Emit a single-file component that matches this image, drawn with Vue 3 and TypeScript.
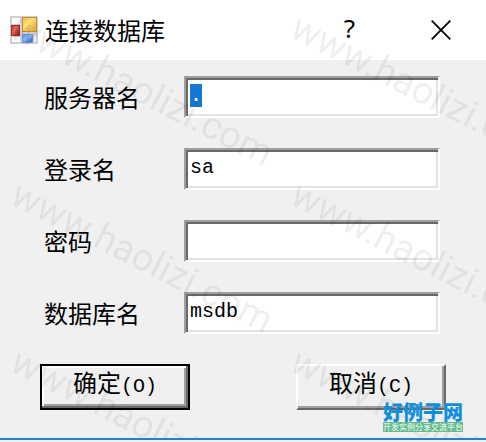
<script setup lang="ts">
import { onMounted, ref } from 'vue'

interface Field {
  id: string
  label: string
  value: string
  type: string
}

const fields = ref<Field[]>([
  { id: 'server', label: '服务器名', value: '.', type: 'text' },
  { id: 'login', label: '登录名', value: 'sa', type: 'text' },
  { id: 'password', label: '密码', value: '', type: 'password' },
  { id: 'database', label: '数据库名', value: 'msdb', type: 'text' },
])

const form = ref<HTMLFormElement | null>(null)

onMounted(() => {
  const first = form.value?.querySelector('input')
  first?.focus()
  first?.select()
})

const marks = [
  { x: 8, y: 36 },
  { x: 288, y: 36 },
  { x: 8, y: 203 },
  { x: 288, y: 203 },
  { x: 8, y: 370 },
  { x: 288, y: 370 },
]
</script>

<template>
  <main class="dialog">
    <header class="titlebar">
      <svg class="app-icon" viewBox="0 0 28 28" aria-hidden="true">
        <defs>
          <linearGradient id="gold" x1="0" y1="0" x2="1" y2="1">
            <stop offset="0" stop-color="#f0b93c" />
            <stop offset=".4" stop-color="#ffe07a" />
            <stop offset="1" stop-color="#dc9c24" />
          </linearGradient>
          <linearGradient id="red" x1="0" y1="0" x2="1" y2="1">
            <stop offset="0" stop-color="#c0302a" />
            <stop offset=".4" stop-color="#dc6a5c" />
            <stop offset="1" stop-color="#950f0c" />
          </linearGradient>
          <linearGradient id="blue" x1="0" y1="0" x2="1" y2="1">
            <stop offset="0" stop-color="#4c86dc" />
            <stop offset=".4" stop-color="#8ab8f4" />
            <stop offset="1" stop-color="#3467be" />
          </linearGradient>
        </defs>
        <rect width="28" height="28" fill="#cfcfcf" />
        <rect x="2" y="2" width="8" height="6" fill="#fff" />
        <rect x="2" y="21" width="8" height="5" fill="#fafafa" />
        <rect x="24" y="19" width="2" height="7" fill="#f4f4f4" />
        <rect x="12.5" y="1.5" width="14" height="14" fill="url(#gold)" stroke="#c28f2c" />
        <rect x="1.5" y="9.5" width="8" height="10" fill="url(#red)" stroke="#a62a24" />
        <rect x="12.5" y="18.5" width="10" height="8" fill="url(#blue)" stroke="#6a94d8" />
      </svg>
      <h1>连接数据库</h1>
      <button type="button" class="caption help" aria-label="帮助">?</button>
      <button type="button" class="caption close" aria-label="关闭">
        <svg viewBox="0 0 20 20" aria-hidden="true">
          <path d="M0.7 0.7 19.3 19.3M19.3 0.7 0.7 19.3" fill="none" stroke="#000" stroke-width="1.8" />
        </svg>
      </button>
    </header>

    <form ref="form" @submit.prevent>
      <div v-for="field in fields" :key="field.id" class="row">
        <label :for="field.id">{{ field.label }}</label>
        <input :id="field.id" v-model="field.value" :type="field.type" autocomplete="off" spellcheck="false" />
      </div>
      <div class="actions">
        <button type="submit" class="push default">确定<span class="key">(O)</span></button>
        <button type="button" class="push">取消<span class="key">(C)</span></button>
      </div>
    </form>

    <svg class="watermark" aria-hidden="true">
      <text v-for="(m, i) in marks" :key="i" :transform="`translate(${m.x} ${m.y}) rotate(27)`">www.haolizi.com</text>
    </svg>
    <div class="brand">
      <strong>好例子网</strong>
      <small>开发实例分享交流平台</small>
    </div>
  </main>
</template>

<style>
body {
  background: #f0f0f0;
}
</style>

<style scoped>
.dialog {
  position: relative;
  box-sizing: border-box;
  overflow: hidden;
  min-height: 440px;
  border-bottom: 2px solid #1e82d2;
  background: #f0f0f0;
  color: #000;
  font-family: "Liberation Mono", "Noto Sans CJK SC", monospace;
}

.titlebar {
  display: flex;
  align-items: center;
  height: 60px;
  padding-left: 10px;
  background: #fff;
}

.app-icon {
  width: 28px;
  height: 28px;
  margin-right: 7px;
}

h1 {
  flex: 1;
  margin: 0;
  font: 24px/32px "Noto Sans CJK SC", sans-serif;
}

.caption {
  display: flex;
  align-items: center;
  justify-content: center;
  width: 91px;
  height: 60px;
  padding: 0;
  border: 0;
  background: none;
  color: #000;
  font: 26px/32px "Noto Sans", sans-serif;
}

.help {
  padding-bottom: 4px;
}

.close svg {
  width: 20px;
  height: 20px;
}

form {
  display: flex;
  flex-direction: column;
  gap: 30px;
  padding: 16px 40px 28px;
}

.row {
  display: grid;
  grid-template-columns: 140px 1fr;
  height: 42px;
  padding: 0 6px 0 4px;
}

label {
  padding-top: 4px;
  font-size: 24px;
  line-height: 42px;
}

input {
  box-sizing: border-box;
  width: 100%;
  height: 42px;
  padding: 4px 4px 8px;
  border: 2px solid;
  border-color: #a0a0a0 #fff #fff #a0a0a0;
  border-radius: 0;
  outline: 0;
  background: #fff;
  box-shadow: inset 2px 2px #696969, inset -2px -2px #e3e3e3;
  color: #000;
  font: 20px/24px "Liberation Mono", "Noto Sans CJK SC", monospace;
  caret-color: transparent;
}

input::selection {
  background: #1478d7;
  color: #fff;
}

.actions {
  display: flex;
  justify-content: space-between;
}

.push {
  width: 150px;
  height: 46px;
  padding: 0 0 2px;
  border: 2px solid;
  border-color: #fff #696969 #696969 #fff;
  border-radius: 0;
  background: #f0f0f0;
  box-shadow: inset -2px -2px #a0a0a0;
  color: #000;
  font: 24px/32px "Liberation Mono", "Noto Sans CJK SC", monospace;
}

.key {
  font-size: 20px;
}

.default {
  border-color: #000;
  box-shadow: inset -2px -2px #696969, inset 2px 2px #fff, inset -4px -4px #a0a0a0;
}

.watermark {
  position: absolute;
  inset: 0;
  width: 100%;
  height: 100%;
  pointer-events: none;
}

.watermark text {
  fill: rgba(0, 0, 0, 0.08);
  font: 38px Roboto, sans-serif;
}

.brand {
  position: absolute;
  right: 23px;
  bottom: 6px;
  display: flex;
  flex-direction: column;
  width: 80px;
  font-family: "Noto Sans CJK SC", sans-serif;
  text-align: center;
  white-space: nowrap;
}

.brand strong {
  color: #118fdc;
  font-size: 20px;
  font-weight: 900;
  line-height: 20px;
}

.brand small {
  background: #62bd8a;
  color: #fff;
  font-size: 8px;
  line-height: 10px;
}
</style>
